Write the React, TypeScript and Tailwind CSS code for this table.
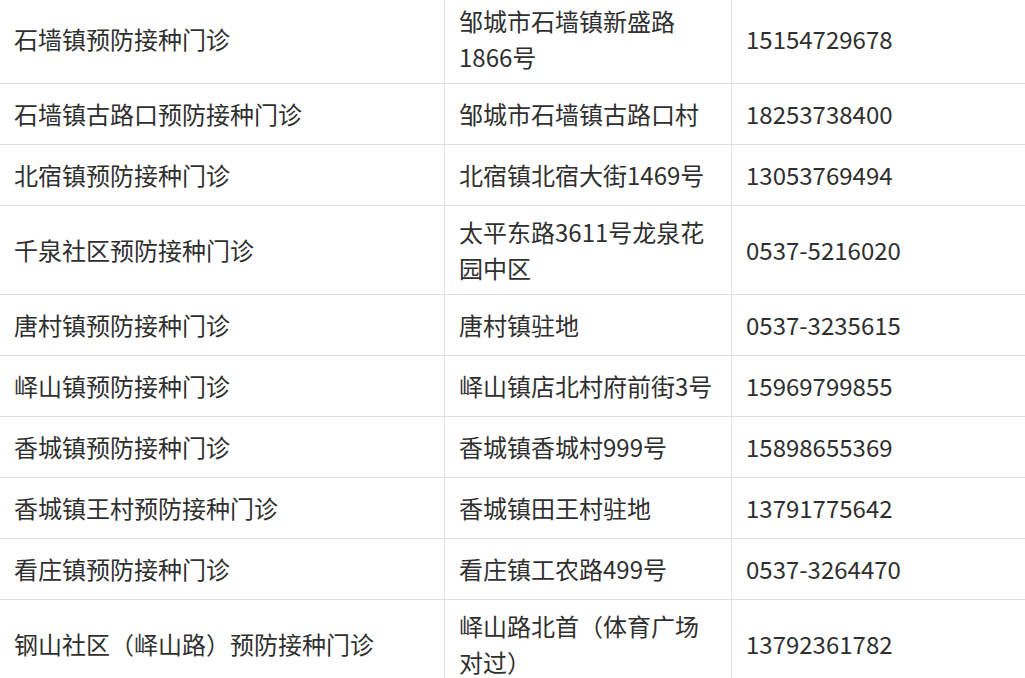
const rows = [
  { name: "石墙镇预防接种门诊", addr: "邹城市石墙镇新盛路1866号", phone: "15154729678", tall: true },
  { name: "石墙镇古路口预防接种门诊", addr: "邹城市石墙镇古路口村", phone: "18253738400" },
  { name: "北宿镇预防接种门诊", addr: "北宿镇北宿大街1469号", phone: "13053769494" },
  { name: "千泉社区预防接种门诊", addr: "太平东路3611号龙泉花园中区", phone: "0537-5216020", tall: true },
  { name: "唐村镇预防接种门诊", addr: "唐村镇驻地", phone: "0537-3235615" },
  { name: "峄山镇预防接种门诊", addr: "峄山镇店北村府前街3号", phone: "15969799855" },
  { name: "香城镇预防接种门诊", addr: "香城镇香城村999号", phone: "15898655369" },
  { name: "香城镇王村预防接种门诊", addr: "香城镇田王村驻地", phone: "13791775642" },
  { name: "看庄镇预防接种门诊", addr: "看庄镇工农路499号", phone: "0537-3264470" },
  { name: "钢山社区（峄山路）预防接种门诊", addr: "峄山路北首（体育广场对过）", phone: "13792361782", tall: true },
];

export default function App() {
  return (
    <div className="w-[1025px] h-[678px] overflow-hidden bg-white">
      <div
        className="-mt-[5px] text-[24px] leading-[36px] text-[#2f2f2f]"
        style={{ fontFamily: '"Noto Sans CJK SC", "Noto Sans", sans-serif' }}
      >
        {rows.map((r, i) => (
          <div
            key={i}
            className={`flex border-b border-[#dedede] ${r.tall ? "h-[89px]" : "h-[61px]"}`}
          >
            <div className="w-[444px] shrink-0 flex items-center px-[14px]">
              {r.name}
            </div>
            <div className="w-[287px] shrink-0 flex items-center px-[14px] border-l border-[#dedede]">
              <span>{r.addr}</span>
            </div>
            <div className="flex-1 flex items-center px-[14px] border-l border-[#dedede]">
              {r.phone}
            </div>
          </div>
        ))}
      </div>
    </div>
  );
}
